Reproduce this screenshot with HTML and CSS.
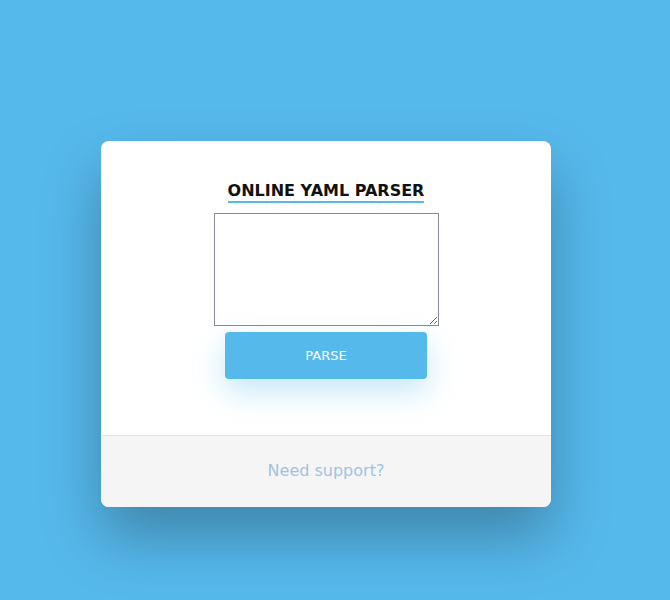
FILE: index.html
```html
<!DOCTYPE html>
<html lang="en">
<head>
  <meta charset="UTF-8" />
  <meta name="viewport" content="width=device-width, initial-scale=1.0" />
  <title>Online YAML Parser</title>
  <link rel="stylesheet" href="styles.css">
</head>
<body>
  <div class="card">
    <div class="card-body">
      <h1 class="title">ONLINE YAML PARSER</h1>
      <textarea class="yaml-input"></textarea>
      <button class="parse-btn" type="button">PARSE</button>
    </div>
    <div class="card-footer">
      <a class="support" href="#">Need support?</a>
    </div>
  </div>
</body>
</html>
```

FILE: styles.css
```css
* { box-sizing: border-box; }
body { margin: 0; background: #56b9ec; font-family: "DejaVu Sans", sans-serif; min-height: 600px; }
.card { width: 450px; margin: 141px 0 0 101px; background: #fff; border-radius: 8px; box-shadow: 0 30px 60px rgba(0,0,0,0.28); overflow: hidden; }
.card-body { display: flex; flex-direction: column; align-items: center; padding: 40px 0 56px; }
.title { margin: 0; font-size: 16px; line-height: 19px; font-weight: bold; color: #111; padding-bottom: 1px; border-bottom: 2px solid #56b9ec; }
.yaml-input { width: 225px; height: 113px; margin-top: 10px; border: 1px solid #8a8a94; resize: both; font-family: "DejaVu Sans Mono", monospace; }
.parse-btn { width: 202px; height: 47px; margin-top: 6px; border: none; border-radius: 4px; background: #56b9ec; color: #fff; font-family: "DejaVu Sans", sans-serif; font-size: 13px; cursor: pointer; box-shadow: 0 12px 30px rgba(86,185,236,0.35); }
.card-footer { background: #f5f5f5; border-top: 1px solid #dde6ef; height: 72px; display: flex; align-items: center; justify-content: center; padding-bottom: 2px; }
.support { color: #9ec3e2; font-size: 16px; text-decoration: none; }
```
